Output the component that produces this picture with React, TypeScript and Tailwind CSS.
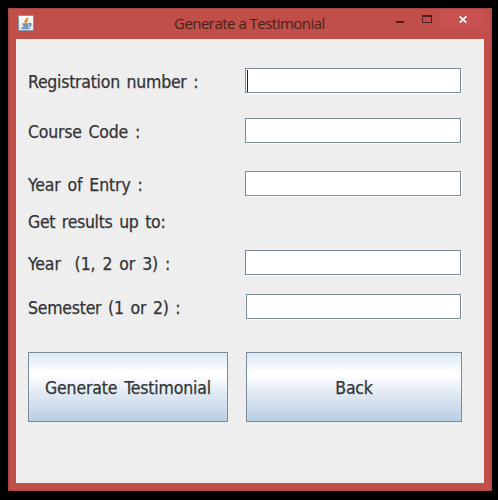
type RowProps = { label: string; track: string; top: string; field?: string; caret?: boolean };

function Row({ label, track, top, field, caret }: RowProps) {
  return (
    <div className={`flex h-[26px] ${top}`}>
      <span className={`block w-[217px] shrink-0 whitespace-pre text-[17.5px] leading-[29px] text-[#333336] [-webkit-text-stroke:0.25px_#333336] [word-spacing:2px] ${track}`}>
        {label}
      </span>
      {field && (
        <div className={`flex h-[25px] border border-[#7a8a99] bg-white pl-px pt-px shadow-[1px_1px_0_#fff] ${field}`}>
          {caret && <span className="block h-[22px] w-px bg-[#222]" />}
        </div>
      )}
    </div>
  );
}

function Action({ label, size }: { label: string; size: string }) {
  return (
    <button
      className={`flex h-[70px] items-center justify-center border border-[#7a8a99] bg-[linear-gradient(#dce8f3_0%,#ffffff_30%,#fafcfe_36%,#dbe6f1_65%,#b8cfe5_100%)] pt-[3px] text-[17.5px] whitespace-nowrap text-[#333336] [-webkit-text-stroke:0.25px_#333336] [word-spacing:2px] ${size}`}
    >
      {label}
    </button>
  );
}

function JavaIcon() {
  return (
    <svg width="16" height="16" viewBox="0 0 16 16" fill="none">
      <defs>
        <linearGradient id="tile" x1="0" y1="0" x2="0" y2="1">
          <stop stopColor="#fff" />
          <stop offset="1" stopColor="#d9dfe7" />
        </linearGradient>
      </defs>
      <rect x=".5" y=".5" width="15" height="15" rx="1" fill="url(#tile)" stroke="#8b96ab" />
      <path d="M9.5 2.4C9.8 4.2 5.6 5 7.5 8M10.2 4.6C8.2 5.4 8.2 6.4 8.8 7.7" stroke="#e88b28" strokeWidth="1.3" />
      <path d="M4.5 9.2h6M5.2 11h4.8M3.6 13.2h7.8M11 8.6c3-.5 2.4 2-.3 2.6" stroke="#46759c" strokeWidth="1.3" />
    </svg>
  );
}

export default function App() {
  return (
    <div className="h-[500px] w-[498px] bg-black pl-2 pt-2 font-['DejaVu_Sans_Condensed','DejaVu_Sans',sans-serif] [font-stretch:75%]">
      <div className="flex h-[483px] w-[484px] flex-col border border-[#a9443f] bg-[#bf4f48] px-[7px] pb-[7px]">
        <header className="flex h-[30px] shrink-0 items-start">
          <div className="ml-[2px] mt-[6px]"><JavaIcon /></div>
          <h1 className="ml-[140px] w-[160px] whitespace-nowrap pt-[4px] font-['Open_Sans',sans-serif] text-[15px] leading-5 tracking-[-0.52px] text-[#47201e] [font-stretch:100%]">
            Generate a Testimonial
          </h1>
          <div className="ml-[62px] mt-[12px] h-[2px] w-2 shrink-0 bg-[#521d1c]" />
          <div className="ml-[18px] mt-[6px] h-2 w-[10px] shrink-0 border border-t-2 border-[#521d1c]" />
          <div className="-mr-px ml-2 flex h-5 w-[45px] shrink-0 items-center justify-center bg-[#c75050]">
            <svg width="8" height="7" viewBox="0 0 8 7" fill="none"><path d="m.7.3 6.6 6.4m0-6.4L.7 6.7" stroke="#fff" strokeWidth="1.7" /></svg>
          </div>
        </header>
        <main className="flex-1 bg-[#eeeeee] pl-3 pt-[29px]">
          <Row label="Registration number :" track="tracking-[-0.25px]" top="" field="w-[216px]" caret />
          <Row label="Course Code :" track="tracking-[-0.2px]" top="mt-6" field="w-[216px]" />
          <Row label="Year of Entry :" track="tracking-[-0.12px]" top="mt-[27px]" field="w-[216px]" />
          <Row label="Get results up to:" track="tracking-[-0.3px]" top="mt-[11px]" />
          <Row label="Year  (1, 2 or 3) :" track="tracking-[-0.08px]" top="mt-4" field="w-[216px]" />
          <Row label="Semester (1 or 2) :" track="tracking-[-0.24px]" top="mt-[18px]" field="ml-px w-[215px]" />
          <div className="mt-8 flex gap-[18px]">
            <Action label="Generate Testimonial" size="w-[200px] tracking-[-0.15px]" />
            <Action label="Back" size="w-[216px] tracking-[-0.2px]" />
          </div>
        </main>
      </div>
    </div>
  );
}
